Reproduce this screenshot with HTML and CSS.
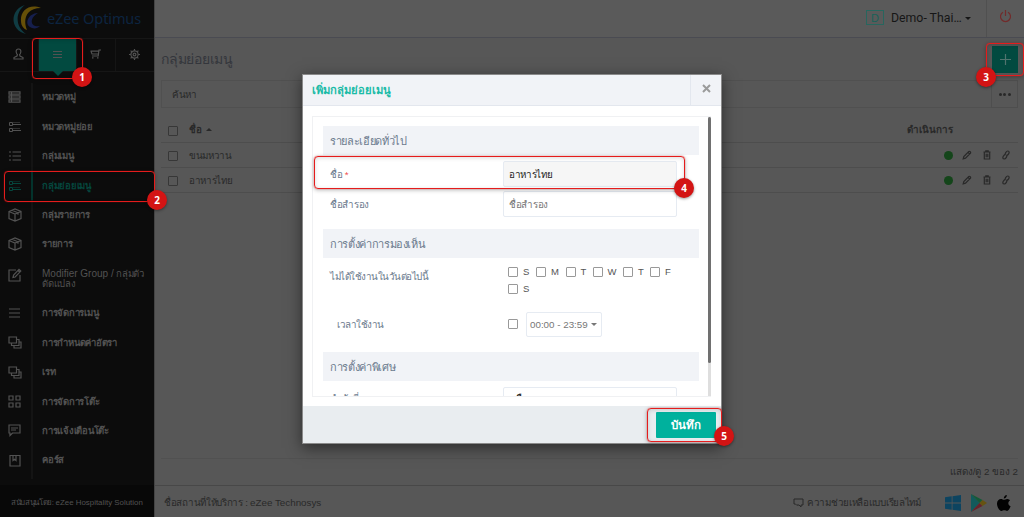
FILE: index.html
```html
<!DOCTYPE html>
<html lang="th">

<head>
  <meta charset="UTF-8">
  <meta name="viewport" content="width=device-width, initial-scale=1.0">
  <title>eZee Optimus</title>
  <link rel="stylesheet" href="styles.css">
</head>

<body>

  <!-- Icons used more than once -->
  <svg class="symbols">
    <symbol id="i-sub" viewBox="0 0 14 12"><path d="M1.500 1.500h3v3h-3zM1.500 7.500h3v3h-3zM5 3.500h8M5 9.500h8"/><path stroke-opacity=".5" d="M5 1.500h7M5 7.500h7"/></symbol>
    <symbol id="i-box" viewBox="0 0 14 14"><path d="M1 3.500L7 1l6 2.500v7L7 13l-6-2.500zM1 3.500L7 6l6-2.500M7 6v7M4 2.300l6 2.500v2"/></symbol>
    <symbol id="i-stack" viewBox="0 0 14 13"><path d="M1 1h7.500v6H1zM3.500 7v2.500H11V3.500H8.500M6 9.500V12h7V6h-2"/></symbol>
    <symbol id="i-pencil" viewBox="0 0 10 10"><path d="M1.200 8.800l.6-2.300 5-5c1-.6 2.300.6 1.700 1.700l-5 5zM6 2.300L7.700 4"/></symbol>
    <symbol id="i-trash" viewBox="0 0 10 10"><path d="M1.500 2h7M3.800 2V.8h2.400V2M2.300 2v7h5.400V2M4.200 3.800v3.500M5.800 3.800v3.500"/></symbol>
    <symbol id="i-link" viewBox="0 0 10 10"><path d="M4.300 5.200C3.300 4 5.500.8 7 1c1.700.3 1.300 2.200.3 3.400-.7.900-1.400 1.200-2 .9M5.700 4.600c1 1.200-1 4.600-2.700 4.400-1.700-.3-1.300-2.200-.3-3.400.7-.9 1.300-1.200 2-.9"/></symbol>
  </svg>

  <aside class="sidebar">
    <div class="logo">
      <svg width="30" height="30" viewBox="0 0 30 30">
        <path fill="#103c43" d="M12 0C-3 4-4 25 13 29 2 22 2 7 12 0z"/>
        <path fill="#665008" d="M28 3C16-2 7 6 8 16c0 5 3 8 6 9-4-9-2-22 14-22z"/>
        <path fill="#161f4d" d="M25 8c-10 0-15 12-6 15 3 1 6 0 8-2-10 2-11-8-2-13z"/>
      </svg>
      <span>eZee Optimus</span>
    </div>
    <div class="tabs">
      <div class="tab"><svg width="11" height="12" viewBox="0 0 11 12"><path d="M5.500 1c-1.800 0-2.600 1.300-2.300 3 .2 1.300.7 2.200 1.200 2.700L4 8 1 9.500V11h9V9.500L7 8l-.4-1.300c.5-.5 1-1.400 1.200-2.700.3-1.700-.5-3-2.300-3z"/></svg></div>
      <div class="tab active"><svg width="9" height="9" viewBox="0 0 9 9"><path d="M0 1.500h9M0 4.500h9M0 7.500h9"/></svg></div>
      <div class="tab"><svg width="11" height="10" viewBox="0 0 11 10"><path d="M11 1H9L8.200 7H2M.5 2.200h8.300M1 2.200L2 5h6.400M2 8.800h1.500M7 8.800h1.500"/></svg></div>
      <div class="tab"><svg width="11" height="11" viewBox="0 0 11 11"><circle cx="5.500" cy="5.500" r="3.600"/><circle cx="5.500" cy="5.500" r="1.400"/><path d="M5.500 0v1.800M5.500 9.200V11M0 5.500h1.800M9.200 5.500H11M1.600 1.600l1.300 1.300M8.100 8.100l1.300 1.300M9.400 1.600L8.100 2.900M2.900 8.100L1.600 9.400"/></svg></div>
    </div>
    <div class="menu">
      <a class="item"><span class="ico"><svg width="13" height="12" viewBox="0 0 13 12"><path d="M1 .8h11v2.400H1zM1 4.800h11v2.400H1zM1 8.800h11v2.400H1zM3.500 1v10"/></svg></span><span>หมวดหมู่</span></a>
      <a class="item"><span class="ico"><svg class="thin" width="14" height="12"><use href="#i-sub"/></svg></span><span>หมวดหมู่ย่อย</span></a>
      <a class="item"><span class="ico"><svg width="12" height="10" viewBox="0 0 12 10"><path d="M0 1h2M3.500 1H12M0 5h2M3.500 5H12M0 9h2M3.500 9H12"/></svg></span><span>กลุ่มเมนู</span></a>
      <a class="item active"><span class="ico"><svg class="thin" width="14" height="12"><use href="#i-sub"/></svg></span><span>กลุ่มย่อยเมนู</span></a>
      <a class="item"><span class="ico"><svg width="14" height="14"><use href="#i-box"/></svg></span><span>กลุ่มรายการ</span></a>
      <a class="item"><span class="ico"><svg width="14" height="14"><use href="#i-box"/></svg></span><span>รายการ</span></a>
      <a class="item tall"><span class="ico"><svg width="14" height="14" viewBox="0 0 14 14"><path d="M8 2H1v11h11V7M5 9.500l.6-2.500L11 1.300l1.800 1.800L7.200 9zM10 2.500L11.700 4"/></svg></span><span><span class="latin">Modifier Group /</span> กลุ่มตัว<br>ดัดแปลง</span></a>
      <a class="item"><span class="ico"><svg width="11" height="10" viewBox="0 0 11 10"><path d="M0 1h11M0 5h11M0 9h11"/></svg></span><span>การจัดการเมนู</span></a>
      <a class="item"><span class="ico"><svg width="14" height="13"><use href="#i-stack"/></svg></span><span>การกำหนดค่าอัตรา</span></a>
      <a class="item"><span class="ico"><svg width="14" height="13"><use href="#i-stack"/></svg></span><span>เรท</span></a>
      <a class="item"><span class="ico"><svg width="13" height="13" viewBox="0 0 13 13"><path d="M1 1h4v4H1zM8 1h4v4H8zM1 8h4v4H1zM8 8h4v4H8z"/></svg></span><span>การจัดการโต๊ะ</span></a>
      <a class="item"><span class="ico"><svg width="13" height="13" viewBox="0 0 13 13"><path d="M1 1h11v8H4.500L2 11.500V9H1zM3 4h7M3 6h5"/></svg></span><span>การแจ้งเตือนโต๊ะ</span></a>
      <a class="item"><span class="ico"><svg width="12" height="13" viewBox="0 0 12 13"><path d="M1 1.500h10V12H1zM4 1.500v5l1.500-1.300L7 6.500v-5"/></svg></span><span>คอร์ส</span></a>
    </div>
    <div class="powered">สนับสนุนโดย: <span class="latin">eZee Hospitality Solution</span></div>
  </aside>

  <main class="main">
    <header class="topbar">
      <span class="badge-d">D</span>
      <span class="hotel">Demo- Thai…</span>
      <span class="caret"></span>
      <span class="power"><svg width="13" height="13" viewBox="0 0 13 13"><path d="M4 2.200a5 5 0 1 0 5 0M6.500 0v6"/></svg></span>
    </header>

    <section class="content">
      <div class="title-row">
        <h1>กลุ่มย่อยเมนู</h1>
        <button class="add"><svg width="11" height="11" viewBox="0 0 11 11"><path d="M5.500 0v11M0 5.500h11"/></svg></button>
      </div>
      <div class="search-row">
        <div class="search">ค้นหา</div>
        <button class="more"><i></i><i></i><i></i></button>
      </div>
      <div class="table">
        <div class="row head">
          <span class="check"></span><span class="cell">ชื่อ <i class="up"></i></span><span class="action">ดำเนินการ</span>
        </div>
        <div class="row">
          <span class="check"></span><span class="cell">ขนมหวาน</span>
          <span class="tools"><i class="dot"></i><svg><use href="#i-pencil"/></svg><svg><use href="#i-trash"/></svg><svg><use href="#i-link"/></svg></span>
        </div>
        <div class="row">
          <span class="check"></span><span class="cell">อาหารไทย</span>
          <span class="tools"><i class="dot"></i><svg><use href="#i-pencil"/></svg><svg><use href="#i-trash"/></svg><svg><use href="#i-link"/></svg></span>
        </div>
      </div>
      <div class="pager">แสดง/ดู 2 ของ 2</div>
    </section>

    <footer class="footer">
      <span class="place">ชื่อสถานที่ให้บริการ : <span class="latin">eZee Technosys</span></span>
      <svg class="chat" width="11" height="10" viewBox="0 0 11 10"><path d="M1 1h9v6H8v2L6 7H4M1 1v5h1.500L4 7.500"/></svg>
      <span class="help">ความช่วยเหลือแบบเรียลไทม์</span>
      <span class="stores">
        <svg width="16" height="16" viewBox="0 0 16 16"><path fill="#0d4460" d="M0 2.300L6.700 1.300v6.200H0zM7.500 1.200L16 0v7.500H7.500zM0 8.400h6.700v6.300L0 13.700zM7.500 8.400H16V16l-8.500-1.200z"/></svg>
        <svg width="16" height="18" viewBox="0 0 16 18"><path fill="#125a5c" d="M0 0v18l8.500-9z"/><path fill="#145a38" d="M0 0l11.500 6L8.500 9z"/><path fill="#66232b" d="M0 18l11.500-6-3-3z"/><path fill="#665311" d="M11.500 6L16 9l-4.500 3-3-3z"/></svg>
        <svg width="14" height="16" viewBox="0 0 14 16"><path fill="#020202" d="M9.800 0c.1 1.800-1.200 3.500-3 3.600C6.600 1.900 8.200.2 9.800 0zM13 5.500c-2.500 1.600-2.100 4.700.6 5.800-.8 2-2 4.500-3.500 4.600-1 0-1.500-.7-2.800-.7s-1.900.7-2.800.7C2.200 16-.1 11.400 0 8.500.1 5.500 2 4 4 4c1.200 0 2.100.8 3 .8S9 3.900 10.500 4c1 .1 1.900.5 2.500 1.500z"/></svg>
      </span>
    </footer>
  </main>

  <div class="modal">
    <div class="modal-head">
      <span class="modal-title">เพิ่มกลุ่มย่อยเมนู</span>
      <span class="close"><svg width="9" height="9" viewBox="0 0 9 9"><path d="M1 1l7 7M8 1L1 8"/></svg></span>
    </div>
    <div class="modal-body">
      <div class="scroll">
        <div class="section">รายละเอียดทั่วไป</div>
        <div class="field first">
          <label>ชื่อ <em>*</em></label>
          <div class="input filled">อาหารไทย</div>
        </div>
        <div class="field second">
          <label>ชื่อสำรอง</label>
          <div class="input">ชื่อสำรอง</div>
        </div>
        <div class="section">การตั้งค่าการมองเห็น</div>
        <div class="field days-row">
          <label class="tight">ไม่ได้ใช้งานในวันต่อไปนี้</label>
          <div class="days">
            <span><i class="box"></i>S</span><span><i class="box"></i>M</span><span><i class="box"></i>T</span><span><i class="box"></i>W</span><span><i class="box"></i>T</span><span><i class="box"></i>F</span><span><i class="box"></i>S</span>
          </div>
        </div>
        <div class="field time-row">
          <label class="tight">เวลาใช้งาน</label>
          <i class="box"></i>
          <div class="time">00:00 - 23:59<i class="caret"></i></div>
        </div>
        <div class="section">การตั้งค่าพิเศษ</div>
        <div class="field last">
          <label>ลำดับที่</label>
          <div class="input">เลือก</div>
        </div>
      </div>
      <div class="track"><div class="thumb"></div></div>
    </div>
    <div class="modal-foot"><button class="save">บันทึก</button></div>
  </div>

  <!-- Step markers over the screen -->
  <div class="mark m1"><b>1</b></div>
  <div class="mark m2"><b>2</b></div>
  <div class="mark m3"><b>3</b></div>
  <div class="mark m4"><b>4</b></div>
  <div class="mark m5"><b>5</b></div>

</body>

</html>
```
FILE: styles.css
```css
* {
  box-sizing: border-box;
}

body {
  display: flex;
  width: 1024px;
  height: 517px;
  margin: 0;
  overflow: hidden;
  font-family: "Liberation Sans", Arial, sans-serif;
  font-size: 9.800px;
  letter-spacing: -0.35px;
  background-color: #575757;
  color: #292929;
}

svg {
  display: block;
  fill: none;
  stroke: currentColor;
  stroke-width: 1.2;
}

.symbols {
  position: absolute;
  width: 0;
  height: 0;
}

button {
  padding: 0;
  border: 0;
  font-family: inherit;
}

.latin {
  letter-spacing: 0;
}

/* Sidebar */
.sidebar {
  display: flex;
  flex-direction: column;
  width: 154px;
  background-color: #0c0c0c;
  color: #525252;
}

.logo {
  display: flex;
  align-items: center;
  height: 38px;
  padding: 1px 0 0 13px;
  gap: 4px;
  font-family: "Noto Sans", sans-serif;
  font-size: 14.5px;
  letter-spacing: -0.1px;
  color: #0c2440;
  white-space: nowrap;
}

.logo svg {
  stroke: none;
  flex: none;
}

.logo span {
  padding-bottom: 4px;
}

.tabs {
  display: grid;
  grid-template-columns: repeat(4, 1fr);
  height: 34px;
  border-top: 1px solid #161616;
  border-bottom: 1px solid #161616;
}

.tab {
  display: flex;
  align-items: center;
  justify-content: center;
  border-right: 1px solid #151515;
  padding-bottom: 2px;
}

.tab:last-child {
  border-right: 0;
}

.tab.active {
  position: relative;
  background-color: #024a40;
}

.tab.active::after {
  content: "";
  position: absolute;
  left: 14px;
  top: 32px;
  border: 5px solid transparent;
  border-top-color: #024a40;
  border-bottom: 0;
}

.menu {
  flex: 1;
  padding-top: 10.800px;
  background: linear-gradient(#141414, #141414) 31px 11px / 2px 396px no-repeat;
}

.item {
  display: flex;
  align-items: center;
  height: 29.400px;
  line-height: 10px;
  font-size: 9.500px;
  font-weight: bold;
  letter-spacing: -0.25px;
  white-space: nowrap;
}

.item.tall {
  height: 39.500px;
  font-weight: normal;
}

.item.tall .latin {
  font-size: 10px;
}

.item.tall .ico {
  padding-bottom: 8px;
}

.ico {
  display: flex;
  justify-content: center;
  width: 29px;
  margin-right: 13px;
}

.thin {
  stroke-width: 1;
}

.item.active {
  color: #05463d;
}

.item.active .ico {
  margin-right: 2px;
}

.item.active .ico + span {
  padding-left: 9px;
  border-left: 2px solid #03332c;
  line-height: 29px;
}

.powered {
  height: 32px;
  padding-left: 11px;
  line-height: 35px;
  background-color: #080808;
  font-size: 7.900px;
  white-space: nowrap;
}

/* Page */
.main {
  flex: 1;
  display: flex;
  flex-direction: column;
  border-left: 1px solid #444;
}

.topbar {
  display: flex;
  align-items: center;
  height: 38px;
  border-bottom: 1px solid #4a4b52;
  background-color: #5a5a5a;
  letter-spacing: 0;
}

.badge-d {
  width: 18px;
  height: 15px;
  margin-left: 711px;
  margin-bottom: 2px;
  border: 1px solid #27665e;
  color: #186258;
  font-size: 11px;
  line-height: 14px;
  text-align: center;
}

.hotel {
  width: 74px;
  margin-left: 7px;
  margin-bottom: 2px;
  font-family: Roboto, sans-serif;
  font-size: 12.300px;
  color: #161616;
  white-space: nowrap;
}

.caret {
  border: 3px solid transparent;
  border-top-color: currentColor;
  border-bottom: 0;
}

.topbar .caret {
  border-top-color: #161616;
}

.power {
  display: flex;
  align-items: center;
  align-self: stretch;
  margin-left: auto;
  padding: 0 12px 4px;
  border-left: 1px solid #505050;
  color: #722b2b;
}

.content {
  flex: 1;
  padding: 6px 6px 0;
}

.title-row {
  display: flex;
  justify-content: space-between;
  align-items: center;
  height: 30px;
}

h1 {
  margin: 0;
  font-size: 14px;
  font-weight: normal;
  letter-spacing: -0.25px;
  color: #34363c;
}

.add {
  display: grid;
  place-items: center;
  width: 26px;
  height: 27px;
  background-color: #024a40;
  color: #51736e;
}

.search-row {
  display: flex;
  height: 28px;
  margin-top: 6px;
}

.search {
  flex: 1;
  padding-left: 10px;
  border: 1px solid #505050;
  border-right: 0;
  line-height: 27px;
}

.more {
  display: flex;
  align-items: center;
  justify-content: center;
  gap: 1.500px;
  width: 27px;
  border: 1px solid #4e4e4e;
  background: none;
}

.more i {
  width: 3px;
  height: 3px;
  border-radius: 50%;
  background-color: #282828;
}

.table {
  height: 342px;
  margin-top: 9px;
  border-bottom: 1px solid #515151;
}

.row {
  display: flex;
  align-items: center;
  height: 25px;
  padding-left: 7px;
  border-bottom: 1px solid #4d4d4d;
}

.row.head {
  height: 26px;
  font-weight: bold;
}

.check {
  width: 10px;
  height: 10px;
  margin-top: 2px;
  border: 1.500px solid #373737;
  border-radius: 1px;
}

.cell {
  flex: 1;
  margin-left: 11px;
}

.up {
  display: inline-block;
  vertical-align: 2px;
  margin-left: 2px;
  border: 3px solid transparent;
  border-bottom-color: currentColor;
  border-top: 0;
}

.action {
  width: 46px;
  margin-right: 65px;
  letter-spacing: 0;
  white-space: nowrap;
}

.tools {
  display: flex;
  align-items: center;
  margin-right: 7px;
}

.tools svg {
  width: 10px;
  height: 10px;
  margin-left: 9.500px;
  stroke-width: 1.2;
}

.dot {
  width: 9px;
  height: 9px;
  border-radius: 50%;
  background-color: #14451a;
}

.pager {
  line-height: 26px;
  letter-spacing: -0.05px;
  text-align: right;
}

.footer {
  display: flex;
  align-items: center;
  height: 32px;
  padding: 2px 13px 0 9px;
  border-top: 1px solid #484848;
  white-space: nowrap;
}

.place {
  letter-spacing: -0.3px;
}

.chat {
  margin-left: auto;
  margin-right: 3px;
  stroke-width: 1;
}

.help {
  width: 115px;
  letter-spacing: -0.3px;
}

.stores {
  display: flex;
  align-items: center;
  gap: 10px;
  margin-left: 23px;
}

.stores svg {
  stroke: none;
}

/* Dialog */
.modal {
  position: absolute;
  left: 302px;
  top: 74px;
  display: flex;
  flex-direction: column;
  width: 420px;
  height: 370px;
  border: 1px solid #8a8a8a;
  background-color: #fff;
  box-shadow: 0 4px 14px rgba(0, 0, 0, 0.5);
  color: #6b7a8d;
}

.modal-head {
  display: flex;
  justify-content: space-between;
  height: 31px;
  border-bottom: 1px solid #e3e7ee;
  background-color: #f1f3f7;
}

.modal-title {
  padding-left: 9px;
  color: #1bbba7;
  font-size: 11.200px;
  font-weight: bold;
  letter-spacing: 0;
  line-height: 31px;
}

.close {
  display: grid;
  place-items: center;
  width: 31px;
  padding-bottom: 3px;
  border-left: 1px solid #e3e7ee;
  color: #9b9b9b;
}

.close svg {
  stroke-width: 2;
}

.modal-body {
  display: flex;
  height: 281px;
  margin: 10px 10px 0 9px;
  border: 1px solid #f0f1f3;
  border-right: 0;
}

.scroll {
  flex: 1;
  padding: 9px 9px 0 10px;
  overflow: hidden;
}

.section {
  height: 29px;
  padding-left: 7px;
  background-color: #f1f3f7;
  font-size: 11px;
  letter-spacing: -0.35px;
  line-height: 30px;
}

.field {
  display: flex;
  align-items: center;
  padding-left: 7px;
}

.field label {
  width: 173px;
}

.field .tight {
  letter-spacing: -0.5px;
}

.field em {
  color: #f05050;
  font-style: normal;
}

.input {
  width: 174px;
  height: 26px;
  padding-left: 5px;
  border: 1px solid #e6ebf2;
  border-radius: 2px;
  line-height: 25px;
  color: #777;
}

.input.filled {
  background-color: #f6f6f6;
  color: #222;
}

.first {
  padding-top: 6px;
}

.second {
  padding: 4px 0 12px 7px;
}

.days-row {
  align-items: flex-start;
  height: 47px;
  padding-top: 6px;
}

.days-row label {
  padding-top: 5px;
}

.days {
  display: flex;
  flex-wrap: wrap;
  width: 190px;
  padding-left: 5px;
  font-size: 9.500px;
  letter-spacing: 0;
}

.days span {
  display: flex;
  align-items: center;
  width: 28px;
  height: 16.500px;
  line-height: 10px;
  color: #555;
}

.days span:nth-child(2) {
  width: 29.500px;
}

.days span:nth-child(3) {
  width: 27px;
}

.days span:nth-child(4) {
  width: 30.500px;
}

.days span:nth-child(5) {
  width: 27px;
}

.box {
  width: 10px;
  height: 10px;
  border: 1px solid #999;
  border-radius: 1px;
}

.days .box {
  margin-right: 5px;
}

.time-row {
  height: 47px;
  padding: 0 0 9px 14px;
}

.time-row label {
  width: 171px;
}

.time {
  display: flex;
  align-items: center;
  justify-content: space-between;
  width: 76px;
  height: 25px;
  margin-left: 8px;
  padding: 0 4px 0 3px;
  border: 1px solid #e6ebf2;
  border-radius: 2px;
  color: #777;
  letter-spacing: 0;
  white-space: nowrap;
}

.last {
  padding-top: 6px;
}

.last .input {
  padding-left: 9px;
  color: #222;
  line-height: 21px;
}

.last label {
  margin-top: -3px;
}

.track {
  width: 3px;
  background-color: #dedede;
}

.thumb {
  height: 246px;
  border-radius: 2px;
  background-color: #707070;
}

.modal-foot {
  display: flex;
  justify-content: flex-end;
  flex: 1;
  margin-top: 9px;
  padding: 6px 5px 0 0;
  background-color: #e9edf0;
}

.save {
  width: 60px;
  height: 26px;
  border-radius: 1px;
  background-color: #00b19d;
  color: #fff;
  font-size: 11.500px;
  font-weight: bold;
}

/* Step markers */
.mark {
  position: absolute;
  border: 1.500px solid #e51c1c;
  border-radius: 4px;
  box-shadow: 0 0 1px #e51c1c, 0 1px 4px rgba(0, 0, 0, 0.3), inset 0 1px 4px rgba(0, 0, 0, 0.15);
}

.mark b {
  position: absolute;
  right: -10px;
  bottom: -9px;
  width: 20px;
  height: 20px;
  border-radius: 50%;
  background-color: #d31414;
  box-shadow: 0 1px 3px rgba(0, 0, 0, 0.4);
  color: #fff;
  font-family: "Open Sans", sans-serif;
  font-size: 10px;
  letter-spacing: 0;
  line-height: 20px;
  text-align: center;
}

.m1 {
  left: 32px;
  top: 38px;
  width: 51px;
  height: 41px;
}

.m2 {
  left: 4px;
  top: 171px;
  width: 151px;
  height: 31px;
}

.m2 b {
  right: -13px;
}

.m3 {
  left: 986px;
  top: 43px;
  width: 38px;
  height: 33px;
}

.m3 b {
  right: auto;
  left: -11px;
  bottom: -12px;
}

.m4 {
  left: 314px;
  top: 156px;
  width: 371px;
  height: 33px;
}

.m4 b {
  bottom: -10px;
}

.m5 {
  left: 647px;
  top: 408px;
  width: 75px;
  height: 34px;
}

.m5 b {
  right: -13px;
  bottom: -5px;
}
```
